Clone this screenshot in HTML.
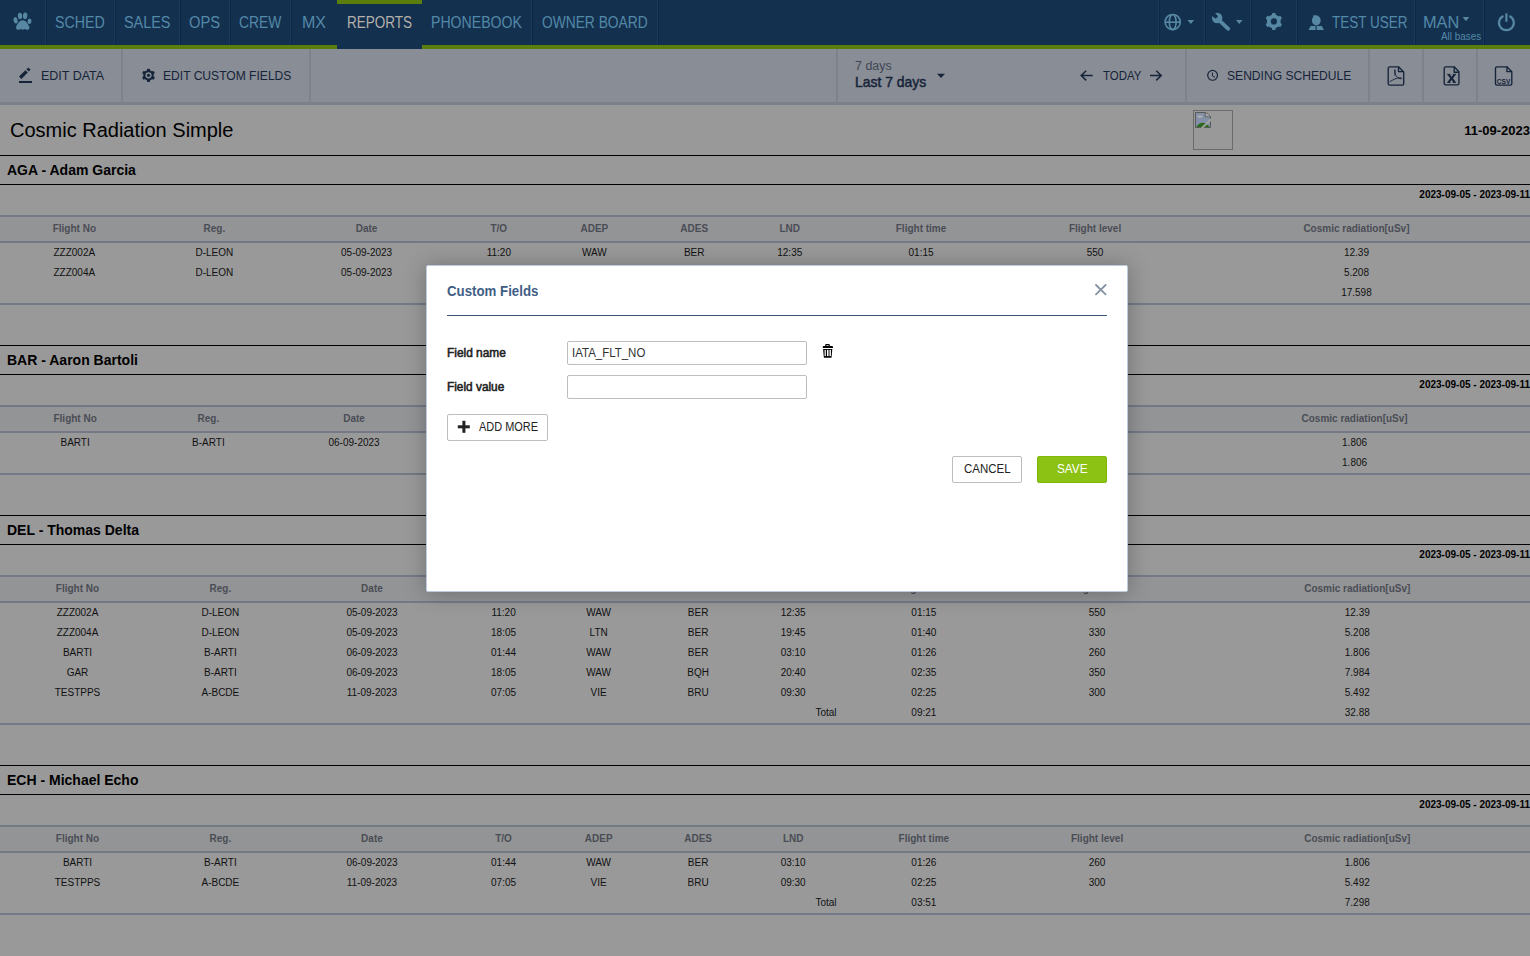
<!DOCTYPE html>
<html><head><meta charset="utf-8">
<style>
*{box-sizing:border-box;margin:0;padding:0}
html,body{width:1530px;height:956px;overflow:hidden;background:#999;font-family:"Liberation Sans",sans-serif}
.t{position:absolute;white-space:nowrap;transform-origin:0 0}
#nav{position:absolute;left:0;top:0;width:1530px;height:45px;background:#14304f}
#green{position:absolute;left:0;top:45px;width:1530px;height:4px;background:#5b7d0b}
.nsep{position:absolute;top:0;width:2px;height:45px;background:linear-gradient(90deg,#173a5e 50%,#0c2844 50%)}
#ractive{position:absolute;left:337px;top:0;width:85px;height:49px;background:#14304f;border-top:4px solid #5b7d0b}
#navsvg{position:absolute;left:0;top:0}
#toolbar{position:absolute;left:0;top:49px;width:1530px;height:56px;background:#898d95;border-bottom:3px solid #7a818b}
.tsep{position:absolute;top:49px;width:2px;height:53px;background:#7c838d}
#tbsvg{position:absolute;left:0;top:0}
#report{position:absolute;left:0;top:105px;width:1530px}
.title{position:relative;height:51px;border-bottom:1px solid #000}
.tt{position:absolute;left:10px;top:14px;font-size:20px;line-height:23px;color:#000}
.logo{position:absolute;left:1193px;top:5px;width:40px;height:40px;border:1px solid #6b6b6b}
.logo svg{position:absolute;left:1px;top:1px}
.tdate{position:absolute;right:0px;top:18px;font-size:13px;font-weight:bold;line-height:15px;color:#000}
.gap{height:41px;border-bottom:1px solid #000}
.pname{height:29px;border-bottom:1px solid #000;font-size:14px;font-weight:bold;padding-left:7px;line-height:28px;color:#000}
.drange{height:30px;text-align:right;font-size:10px;font-weight:bold;line-height:14px;padding-top:3px;color:#000}
table.rt{width:1529.5px;border-collapse:separate;border-spacing:0;font-size:10px;color:#111}
.rt th{height:28px;font-weight:bold;color:#4a4d55;text-align:center;padding:0 2px 2px;border-top:2px solid #737a85;border-bottom:2px solid #737a85;background:#939496;line-height:13px}
.rt td{height:20px;text-align:center;padding:0 2px 2px;line-height:13px}
.rt tbody tr:last-child td{height:22px;border-bottom:2px solid #737a85}
.rt td.tl{text-align:right}
#shade{position:absolute;left:426px;top:265px;width:702px;height:327px;border-radius:2px;box-shadow:0 1px 22px rgba(0,0,0,.27)}
#modal{position:absolute;left:426px;top:265px;width:702px;height:327px;background:#fff;border:1px solid #bccbdd;border-radius:2px}
.inp{position:absolute;width:240px;height:24px;border:1px solid #bdbdbd;border-radius:2px;background:#fff}
.btn{position:absolute;height:27px;border:1px solid #bdbdbd;border-radius:2px;background:#fff}
#msvg{position:absolute;left:0;top:0}
</style></head><body>
<div id="nav"><div class="nsep" style="left:45px"></div><div class="nsep" style="left:114px"></div><div class="nsep" style="left:179px"></div><div class="nsep" style="left:229px"></div><div class="nsep" style="left:290px"></div><div class="nsep" style="left:531px"></div><div class="nsep" style="left:657px"></div><div class="nsep" style="left:1158px"></div><div class="nsep" style="left:1204px"></div><div class="nsep" style="left:1250px"></div><div class="nsep" style="left:1296px"></div><div class="nsep" style="left:1414px"></div><div class="nsep" style="left:1483px"></div><span class="t" style="left:55.1px;top:15.0px;font-size:16px;line-height:16px;font-weight:400;color:#5389a8;transform:scaleX(0.889);">SCHED</span><span class="t" style="left:124.1px;top:15.0px;font-size:16px;line-height:16px;font-weight:400;color:#5389a8;transform:scaleX(0.900);">SALES</span><span class="t" style="left:189.1px;top:15.0px;font-size:16px;line-height:16px;font-weight:400;color:#5389a8;transform:scaleX(0.922);">OPS</span><span class="t" style="left:238.6px;top:15.0px;font-size:16px;line-height:16px;font-weight:400;color:#5389a8;transform:scaleX(0.865);">CREW</span><span class="t" style="left:302.0px;top:15.0px;font-size:16px;line-height:16px;font-weight:400;color:#5389a8;transform:scaleX(1.000);">MX</span><span class="t" style="left:431.1px;top:15.0px;font-size:16px;line-height:16px;font-weight:400;color:#5389a8;transform:scaleX(0.882);">PHONEBOOK</span><span class="t" style="left:541.9px;top:15.0px;font-size:16px;line-height:16px;font-weight:400;color:#5389a8;transform:scaleX(0.861);">OWNER BOARD</span><span class="t" style="left:1331.7px;top:15.0px;font-size:16px;line-height:16px;font-weight:400;color:#5389a8;transform:scaleX(0.844);">TEST USER</span><span class="t" style="left:1422.6px;top:15.0px;font-size:16px;line-height:16px;font-weight:400;color:#5389a8;transform:scaleX(1.018);">MAN</span><span class="t" style="left:1440.8px;top:32.3px;font-size:10px;line-height:10px;font-weight:400;color:#5389a8;transform:scaleX(0.989);">All bases</span><svg id="navsvg" width="1530" height="45" viewBox="0 0 1530 45">
<g fill="#5688a3">
<ellipse cx="15.6" cy="20.3" rx="2.0" ry="3.2" transform="rotate(-12 15.6 20.3)"/>
<ellipse cx="20.0" cy="16.0" rx="2.15" ry="3.15" transform="rotate(-5 20 16)"/>
<ellipse cx="25.1" cy="15.7" rx="2.2" ry="3.3" transform="rotate(5 25.1 15.7)"/>
<ellipse cx="29.5" cy="21.3" rx="2.0" ry="2.7" transform="rotate(12 29.5 21.3)"/>
<path d="M22.7 20.2C19.6 20.2 17.6 23.5 16.3 26.2C15.6 27.8 16.2 29.8 18.3 29.8C19.6 29.8 20.3 28.9 21.2 28.9C21.9 28.9 22.3 29.8 22.9 29.8C23.5 29.8 23.9 28.9 24.6 28.9C25.5 28.9 26.2 29.8 27.3 29.8C29.3 29.8 29.9 27.8 29.1 26.2C27.8 23.5 25.8 20.2 22.7 20.2Z"/>
</g>
<g fill="none" stroke="#5688a3" stroke-width="1.6">
<circle cx="1172.7" cy="22.05" r="7.6"/>
<ellipse cx="1172.7" cy="22.05" rx="3.4" ry="7.6"/>
<line x1="1165" y1="22.2" x2="1180.4" y2="22.2"/>
</g>
<path d="M1187.5 19.9H1194.1L1190.8 24.1Z" fill="#5688a3"/>
<path d="M1236 19.9H1242.5L1239.25 24.1Z" fill="#5688a3"/>
<path d="M1462.7 17H1469.2L1465.95 21.3Z" fill="#5688a3"/>
<g>
<circle cx="1217.2" cy="18.0" r="5.2" fill="#5688a3"/>
<line x1="1210.8" y1="11.6" x2="1215.6" y2="16.4" stroke="#14304f" stroke-width="4.0" stroke-linecap="round"/>
<line x1="1219" y1="20.2" x2="1228.3" y2="28.8" stroke="#5688a3" stroke-width="3.8" stroke-linecap="round"/>
</g>
<g fill="#5688a3"><circle cx="1273.8" cy="21.4" r="6.9"/><rect x="1272.00" y="12.90" width="3.6" height="8.50" rx="0.6" transform="rotate(0.0 1273.8 21.4)"/><rect x="1272.00" y="12.90" width="3.6" height="8.50" rx="0.6" transform="rotate(60.0 1273.8 21.4)"/><rect x="1272.00" y="12.90" width="3.6" height="8.50" rx="0.6" transform="rotate(120.0 1273.8 21.4)"/><rect x="1272.00" y="12.90" width="3.6" height="8.50" rx="0.6" transform="rotate(180.0 1273.8 21.4)"/><rect x="1272.00" y="12.90" width="3.6" height="8.50" rx="0.6" transform="rotate(240.0 1273.8 21.4)"/><rect x="1272.00" y="12.90" width="3.6" height="8.50" rx="0.6" transform="rotate(300.0 1273.8 21.4)"/></g><circle cx="1273.9" cy="21.4" r="3.1" fill="#14304f"/>
<g fill="#5688a3">
<ellipse cx="1316.3" cy="20.5" rx="4.35" ry="5.0"/><path d="M1313.6 14.9L1318.5 16.2L1313 17.5Z"/>
<path d="M1310.6 25.9H1315.5V30H1308.5Z"/>
<path d="M1316.6 25.9H1321.8L1324 30H1316.6Z"/>
</g>
<g fill="none" stroke="#5688a3" stroke-width="2.2">
<path d="M1503.4 16.0A7.4 7.4 0 1 0 1509.4 16.0"/>
<line x1="1506.4" y1="13.4" x2="1506.4" y2="21.8"/>
</g>
</svg></div>
<div id="green"></div><div id="ractive"></div><span class="t" style="left:347.0px;top:15.0px;font-size:16px;line-height:16px;font-weight:400;color:#b3b0aa;transform:scaleX(0.845);">REPORTS</span>
<div id="toolbar"></div>
<div style="position:absolute;left:0;top:0;width:1530px;height:105px"><div class="tsep" style="left:121px"></div><div class="tsep" style="left:309px"></div><div class="tsep" style="left:836px"></div><div class="tsep" style="left:1185px"></div><div class="tsep" style="left:1368px"></div><div class="tsep" style="left:1422px"></div><div class="tsep" style="left:1476px"></div><span class="t" style="left:40.6px;top:69.0px;font-size:13px;line-height:13px;font-weight:400;color:#16243a;transform:scaleX(0.960);">EDIT DATA</span><span class="t" style="left:163.3px;top:69.0px;font-size:13px;line-height:13px;font-weight:400;color:#16243a;transform:scaleX(0.929);">EDIT CUSTOM FIELDS</span><span class="t" style="left:1103.0px;top:69.0px;font-size:13px;line-height:13px;font-weight:400;color:#16243a;transform:scaleX(0.884);">TODAY</span><span class="t" style="left:1227.3px;top:69.0px;font-size:13px;line-height:13px;font-weight:400;color:#16243a;transform:scaleX(0.930);">SENDING SCHEDULE</span><span class="t" style="left:854.9px;top:60.0px;font-size:12px;line-height:12px;font-weight:400;color:#3e4653;transform:scaleX(1.038);">7 days</span><span class="t" style="left:855.3px;top:74.0px;font-size:15px;line-height:15px;font-weight:400;color:#16243a;transform:scaleX(0.929);-webkit-text-stroke:0.5px #16243a">Last 7 days</span></div>
<div id="tbsvgwrap" style="position:absolute;left:0;top:49px"><svg id="tbsvg" width="1530" height="56" viewBox="0 49 1530 56">
<g stroke="#16243a" stroke-width="3.4">
<line x1="20.2" y1="77.8" x2="26.6" y2="71.4"/>
<line x1="27.6" y1="70.4" x2="29.4" y2="68.6"/>
</g>
<rect x="19" y="81" width="13" height="2" fill="#16243a"/>
<g fill="#16243a"><circle cx="148.5" cy="75.3" r="5.2"/><rect x="147.00" y="68.70" width="3.0" height="6.60" rx="0.6" transform="rotate(0.0 148.5 75.3)"/><rect x="147.00" y="68.70" width="3.0" height="6.60" rx="0.6" transform="rotate(60.0 148.5 75.3)"/><rect x="147.00" y="68.70" width="3.0" height="6.60" rx="0.6" transform="rotate(120.0 148.5 75.3)"/><rect x="147.00" y="68.70" width="3.0" height="6.60" rx="0.6" transform="rotate(180.0 148.5 75.3)"/><rect x="147.00" y="68.70" width="3.0" height="6.60" rx="0.6" transform="rotate(240.0 148.5 75.3)"/><rect x="147.00" y="68.70" width="3.0" height="6.60" rx="0.6" transform="rotate(300.0 148.5 75.3)"/></g>
<circle cx="148.5" cy="75.3" r="3.1" fill="#898d95"/>
<circle cx="148.5" cy="75.3" r="1.6" fill="#16243a"/>
<path d="M937 73.8H945L941 78Z" fill="#16243a"/>
<g fill="none" stroke="#16243a" stroke-width="1.5">
<path d="M1086.2 70.7L1081.2 75.5L1086.2 80.4M1081.2 75.5H1092.7"/>
<path d="M1156.2 70.7L1161.2 75.5L1156.2 80.4M1161.2 75.5H1150"/>
</g>
<g fill="none" stroke="#16243a" stroke-width="1.2">
<circle cx="1212.6" cy="75.35" r="4.9"/>
<path d="M1212.4 72.6V75.9L1214.9 77.3" stroke-width="1"/>
</g>
<g fill="none" stroke="#16243a" stroke-width="1.35" stroke-linejoin="round">
<path d="M1389.6 66.8H1398.5L1403.7 72V83.7Q1403.7 85.1 1402.3 85.1H1389.6Q1388.2 85.1 1388.2 83.7V68.2Q1388.2 66.8 1389.6 66.8Z"/>
<path d="M1398.5 66.8V71.6H1403.7"/>
<path d="M1445.6 66.8H1454.2L1458.9 71.8V83.5Q1458.9 84.9 1457.5 84.9H1445.6Q1444.2 84.9 1444.2 83.5V68.2Q1444.2 66.8 1445.6 66.8Z"/>
<path d="M1454.2 66.8V72.2H1458.9"/>
<path d="M1496.9 66.8H1506.9L1511.8 71.8V83.7Q1511.8 85.1 1510.4 85.1H1496.9Q1495.5 85.1 1495.5 83.7V68.2Q1495.5 66.8 1496.9 66.8Z"/>
<path d="M1506.9 66.8V71.6H1511.8"/>
</g>
<g fill="none" stroke="#16243a" stroke-width="0.9">
<path d="M1394.7 69.6C1394.2 73 1395.5 75.5 1397.5 77.5C1399 78.8 1401.2 79 1401.7 78.5C1402.2 78 1400.5 77.5 1398.8 77.8C1396.8 78 1393.5 79.5 1389.6 81.8"/>
<path d="M1394.9 69.8C1395.3 71 1395.3 73.5 1394.9 75.5"/>
</g>
<g stroke="#16243a" stroke-width="2.1"><line x1="1448.6" y1="74.6" x2="1454.6" y2="82.2"/><line x1="1454.6" y1="74.6" x2="1448.6" y2="82.2"/></g><g stroke="#16243a" stroke-width="1"><line x1="1447.2" y1="74.4" x2="1450.4" y2="74.4"/><line x1="1452.8" y1="74.4" x2="1456" y2="74.4"/><line x1="1447.2" y1="82.4" x2="1450.4" y2="82.4"/><line x1="1452.8" y1="82.4" x2="1456" y2="82.4"/></g>
<text x="1503.6" y="83.7" text-anchor="middle" font-family="Liberation Sans" font-weight="bold" font-size="8" fill="#16243a" transform="translate(1503.6 0) scale(0.82 1) translate(-1503.6 0)">CSV</text>
</svg></div>
<div id="report"><div class="title"><span class="tt">Cosmic Radiation Simple</span><div class="logo"><svg width="16" height="16" viewBox="0 0 16 16"><path d="M0.5 0.5H10.2Q13.5 1.2 15.5 4.8V15.5H0.5Z" fill="#8490a8" stroke="#5a5a5a" stroke-width="1"/><path d="M10.3 0.8V4.8H15.3" fill="#a0a0a0" stroke="#5a5a5a" stroke-width="1"/><path d="M10.8 1.3Q13.6 2 14.8 4.3H10.8Z" fill="#a6a6a6"/><ellipse cx="5" cy="4.6" rx="2.8" ry="1.2" fill="#b0b0b0"/><path d="M1 15Q7.5 6.5 14.8 15Z" fill="#2e6b1f"/><path d="M6.8 16.2L16.2 7.2" stroke="#a4a4a4" stroke-width="1.8"/></svg></div><span class="tdate">11-09-2023</span></div><div class="pname">AGA - Adam Garcia</div><div class="drange">2023-09-05 - 2023-09-11</div><table class="rt"><thead><tr><th>Flight No</th><th>Reg.</th><th>Date</th><th>T/O</th><th>ADEP</th><th>ADES</th><th>LND</th><th>Flight time</th><th>Flight level</th><th>Cosmic radiation[uSv]</th></tr></thead><tbody><tr><td>ZZZ002A</td><td>D-LEON</td><td>05-09-2023</td><td>11:20</td><td>WAW</td><td>BER</td><td>12:35</td><td>01:15</td><td>550</td><td>12.39</td></tr><tr><td>ZZZ004A</td><td>D-LEON</td><td>05-09-2023</td><td>18:05</td><td>LTN</td><td>BER</td><td>19:45</td><td>01:40</td><td>330</td><td>5.208</td></tr><tr class="tot"><td colspan="7" class="tl">Total</td><td>02:55</td><td></td><td>17.598</td></tr></tbody></table><div class="gap"></div><div class="pname">BAR - Aaron Bartoli</div><div class="drange">2023-09-05 - 2023-09-11</div><table class="rt"><thead><tr><th>Flight No</th><th>Reg.</th><th>Date</th><th>T/O</th><th>ADEP</th><th>ADES</th><th>LND</th><th>Flight time</th><th>Flight level</th><th>Cosmic radiation[uSv]</th></tr></thead><tbody><tr><td>BARTI</td><td>B-ARTI</td><td>06-09-2023</td><td>01:44</td><td>WAW</td><td>BER</td><td>03:10</td><td>01:26</td><td>260</td><td>1.806</td></tr><tr class="tot"><td colspan="7" class="tl">Total</td><td>01:26</td><td></td><td>1.806</td></tr></tbody></table><div class="gap"></div><div class="pname">DEL - Thomas Delta</div><div class="drange">2023-09-05 - 2023-09-11</div><table class="rt"><thead><tr><th>Flight No</th><th>Reg.</th><th>Date</th><th>T/O</th><th>ADEP</th><th>ADES</th><th>LND</th><th>Flight time</th><th>Flight level</th><th>Cosmic radiation[uSv]</th></tr></thead><tbody><tr><td>ZZZ002A</td><td>D-LEON</td><td>05-09-2023</td><td>11:20</td><td>WAW</td><td>BER</td><td>12:35</td><td>01:15</td><td>550</td><td>12.39</td></tr><tr><td>ZZZ004A</td><td>D-LEON</td><td>05-09-2023</td><td>18:05</td><td>LTN</td><td>BER</td><td>19:45</td><td>01:40</td><td>330</td><td>5.208</td></tr><tr><td>BARTI</td><td>B-ARTI</td><td>06-09-2023</td><td>01:44</td><td>WAW</td><td>BER</td><td>03:10</td><td>01:26</td><td>260</td><td>1.806</td></tr><tr><td>GAR</td><td>B-ARTI</td><td>06-09-2023</td><td>18:05</td><td>WAW</td><td>BQH</td><td>20:40</td><td>02:35</td><td>350</td><td>7.984</td></tr><tr><td>TESTPPS</td><td>A-BCDE</td><td>11-09-2023</td><td>07:05</td><td>VIE</td><td>BRU</td><td>09:30</td><td>02:25</td><td>300</td><td>5.492</td></tr><tr class="tot"><td colspan="7" class="tl">Total</td><td>09:21</td><td></td><td>32.88</td></tr></tbody></table><div class="gap"></div><div class="pname">ECH - Michael Echo</div><div class="drange">2023-09-05 - 2023-09-11</div><table class="rt"><thead><tr><th>Flight No</th><th>Reg.</th><th>Date</th><th>T/O</th><th>ADEP</th><th>ADES</th><th>LND</th><th>Flight time</th><th>Flight level</th><th>Cosmic radiation[uSv]</th></tr></thead><tbody><tr><td>BARTI</td><td>B-ARTI</td><td>06-09-2023</td><td>01:44</td><td>WAW</td><td>BER</td><td>03:10</td><td>01:26</td><td>260</td><td>1.806</td></tr><tr><td>TESTPPS</td><td>A-BCDE</td><td>11-09-2023</td><td>07:05</td><td>VIE</td><td>BRU</td><td>09:30</td><td>02:25</td><td>300</td><td>5.492</td></tr><tr class="tot"><td colspan="7" class="tl">Total</td><td>03:51</td><td></td><td>7.298</td></tr></tbody></table></div>
<div id="shade"></div>
<div id="modal"></div>
<span class="t" style="left:447.4px;top:282.6px;font-size:15px;line-height:15px;font-weight:700;color:#3f5e85;transform:scaleX(0.884);">Custom Fields</span><div style="position:absolute;left:447px;top:315px;width:660px;height:1px;background:#3c5677"></div><span class="t" style="left:446.8px;top:347.2px;font-size:12px;line-height:12px;font-weight:400;color:#222;transform:scaleX(0.992);-webkit-text-stroke:0.55px #222">Field name</span><span class="t" style="left:446.8px;top:381.0px;font-size:12px;line-height:12px;font-weight:400;color:#222;transform:scaleX(0.987);-webkit-text-stroke:0.55px #222">Field value</span><div class="inp" style="left:567px;top:341px"></div><div class="inp" style="left:567px;top:375px"></div><span class="t" style="left:571.8px;top:347.0px;font-size:12px;line-height:12px;font-weight:400;color:#333;transform:scaleX(0.956);">IATA_FLT_NO</span><div class="btn" style="left:447px;top:414px;width:101px"></div><span class="t" style="left:478.6px;top:421.2px;font-size:12px;line-height:12px;font-weight:400;color:#222;transform:scaleX(0.912);">ADD MORE</span><div class="btn" style="left:952px;top:456px;width:70px"></div><span class="t" style="left:963.7px;top:463.4px;font-size:12px;line-height:12px;font-weight:400;color:#222;transform:scaleX(0.956);">CANCEL</span><div class="btn" style="left:1037px;top:456px;width:70px;background:#8cc213;border-color:#82b80e"></div><span class="t" style="left:1056.6px;top:463.4px;font-size:12px;line-height:12px;font-weight:400;color:#fff;transform:scaleX(0.980);">SAVE</span>
<svg id="msvg" width="1530" height="956" viewBox="0 0 1530 956">
<g stroke="#8592a3" stroke-width="1.8" stroke-linecap="round"><line x1="1096" y1="285" x2="1105.6" y2="294.3"/><line x1="1105.6" y1="285" x2="1096" y2="294.3"/></g>
<rect x="457.8" y="425.3" width="12" height="3" fill="#222"/><rect x="462.4" y="420.8" width="3" height="12" fill="#222"/>
<g fill="#000">
<path d="M825.2 346.3V344.9Q825.2 343.9 826.2 343.9H828.8Q829.8 343.9 829.8 344.9V346.3H828.6V345.2H826.4V346.3Z"/>
<path d="M823.6 346H832.2Q833 346 833 346.8V347.9H822.8V346.8Q822.8 346 823.6 346Z"/>
<path d="M823.1 349H832.3L831.6 356.9Q831.5 357.8 830.6 357.8H824.8Q823.9 357.8 823.8 356.9Z"/>
</g>
<g fill="#fff"><rect x="824.6" y="349.9" width="1.2" height="6.2"/><rect x="827" y="349.9" width="1.2" height="6.2"/><rect x="829.7" y="349.9" width="1.2" height="6.2"/></g>
<rect x="828.2" y="349.9" width="1.5" height="6.2" fill="#999"/>
</svg>
</body></html>
